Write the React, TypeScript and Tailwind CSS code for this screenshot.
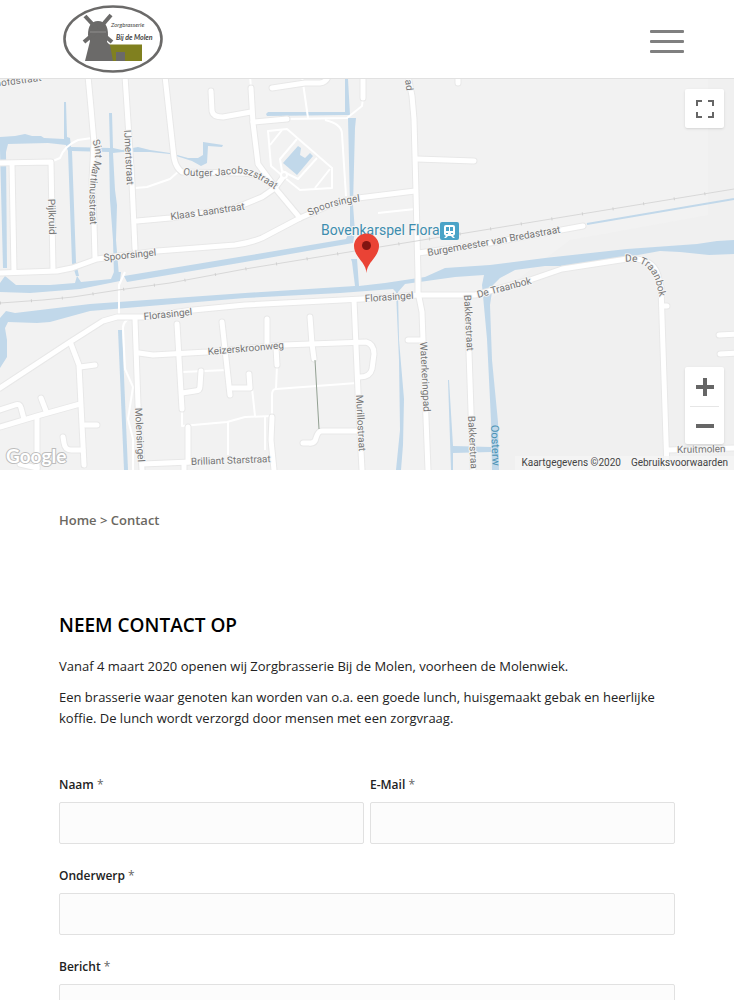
import React from 'react';

const water = [
  "M0 137 L15 136 L25 134 L32 136 L41 136 L44 138 L64 139 L64 102 L66 102 L67 137 L70 138 L71 147 L110 148 L109 113 L112 113 L113 148 L122 150 L138 147 L150 150 L170 153 L188 158 L198 158 L203 155 L203 142 L223 145 L222 147 L208 146 L207 163 L201 166 L192 161 L170 154 L150 152 L122 152 L113 153 L115 190 L117 205 L116 240 L119 276 L114 276 L113 240 L110 200 L109 152 L72 151 L76 262 L79 276 L76 276 L72 263 L68 151 L66 145 L48 143 L8 144 L6 152 L7 268 L3 268 L0 150 Z",
  "M0 283 L5 276 L16 285 L50 285 L75 283 L77 276 L81 282 L111 279 L114 272 L121 272 L120 281 L80 289 L30 293 L0 292 Z",
  "M124 276 L245 256 L346 239 L350 230 L350 205 L348 118 L356 118 L355 128 L353 205 L355 232 L353 243 L330 247 L245 262 L127 282 Z",
  "M345 79 L348 79 L350 115 L345 115 L267 116 L266 114 L268 112 L345 112 Z",
  "M0 318 L6 311 L15 313 L90 304 L245 293 L355 286 L352 262 L351 259 L357 259 L359 286 L385 283 L425 277 L445 268 L490 265 L545 258 L627 249 L697 244 L717 241 L734 240 L734 254 L709 255 L680 252 L660 251 L627 257 L565 266 L545 266 L515 270 L500 278 L493 285 L490 305 L492 360 L498 422 L499 470 L492 470 L491 420 L487 339 L482 285 L484 275 L455 277 L405 284 L398 292 L399 340 L404 399 L403 445 L401 470 L396 470 L400 430 L399 360 L396 292 L393 289 L340 293 L245 298 L90 311 L50 322 L37 323 L8 322 L5 328 L7 340 L7 357 L0 368 Z",
  "M118 330 L122 330 L128 470 L124 470 Z",
  "M448 380 L449 380 L453 446 L491 447 L491 452 L453 453 L453 470 L451 470 Z",
  "M283 163 L298 146 L301 148 L300 155 L305 158 L310 153 L313 156 L297 175 Z",
];

const roads = [
  "M88 76 L91 108 L94 143 L92 180 L94 223 L95 258",
  "M125 76 L132 183 L135 249",
  "M165 76 L174 158 Q176 168 182 172 L240 173 Q258 172 275 187",
  "M211 91 L212 111 Q213 117 223 117 L251 112",
  "M0 163 L51 162 L53 270",
  "M12 164 L14 272",
  "M0 273 L57 271 L72 268 L97 259 L157 251 L235 245 Q250 243 262 238 L300 218 L330 205 L358 198 L415 191",
  "M137 221 L170 218 L235 208 L262 197 L275 188 L284 176",
  "M275 188 L300 218",
  "M251 88 L253 123 L258 164 L275 187",
  "M253 122 L287 119",
  "M363 76 L363 98",
  "M272 88 L305 83 L320 83 Q327 82 328 76",
  "M408 76 L412 96 L414 119 L416 193 L418 276 L418 292 L422 312 L423 340 L428 470",
  "M417 159 L474 161",
  "M458 76 L458 83",
  "M418 253 L490 243 L583 226",
  "M0 388 L70 342 L103 321 L117 317 L143 317 L193 310 L245 305 L362 299 L418 295 L475 295 L530 280 L562 269 L627 259 Q652 257 658 275 L661 287 L667 470",
  "M662 306 L667 306",
  "M719 335 L740 334",
  "M720 354 L740 353",
  "M668 450 L734 448",
  "M135 319 L138 405 L142 470",
  "M71 344 L79 365 L84 465",
  "M80 367 L95 365",
  "M85 425 L97 425",
  "M63 437 L64 443 Q65 450 71 450 L83 450",
  "M0 427 L37 416 L80 404",
  "M0 410 L15 405 Q20 403 21 408 L24 419",
  "M41 398 L46 411",
  "M37 418 L37 470",
  "M20 464 L37 468",
  "M139 353 L153 355 L207 352 L283 345 L366 342 Q374 344 374 354 L372 369 Q370 377 360 377",
  "M177 324 L182 409",
  "M188 427 L188 462",
  "M222 322 L230 395",
  "M182 393 L195 391 Q200 391 200 386 L201 371",
  "M232 388 L250 388 L249 374",
  "M143 464 L190 462",
  "M184 464 L184 472",
  "M267 319 L267 344",
  "M276 347 L277 365",
  "M310 317 L312 344 L314 359",
  "M272 417 L271 440 L274 470",
  "M357 431 L322 431 Q318 431 316 438 Q315 444 309 443 L303 443",
  "M354 300 L358 392 L362 470",
  "M408 340 L422 340",
  "M467 296 L469 352 L473 470",
];

const paths = [
  "M53 161 L60 158 Q64 146 78 140 L92 138",
  "M135 188 L147 187 L170 179 L179 171",
  "M250 76 L251 88",
  "M287 119 L347 118 L362 106 L363 98",
  "M302 76 L308 118",
  "M325 120 Q342 124 342 134 L346 196",
  "M378 213 L415 209",
  "M125 272 L119 285 L119 317",
  "M135 317 Q123 319 123 328 L125 369 L133 387 L128 419 L133 439 L133 470",
  "M182 409 L182 426 L227 422 L245 417 L272 416",
  "M182 372 L227 370",
  "M252 388 L255 416",
  "M228 422 L228 455",
  "M277 365 L276 389",
  "M357 383 L276 389 Q272 389 272 395 L272 416",
  "M265 417 L265 450",
  "M268 131 L287 129 L332 168 L332 188 L300 190 L285 178 L271 166 Z",
  "M270 145 L282 130",
  "M297 139 L280 159 L282 171 L298 179 L317 158",
  "M330 169 L315 188",
];

// street names that follow a bend in the road
const curved = [
  { id: "hoofd", d: "M-4 87 Q20 84 60 78", text: "oofdstraat" },
  { id: "martinus", d: "M92 141 Q98 153 93 166 Q87 190 91 236", text: "Sint Martinusstraat" },
  { id: "outger", d: "M183 175 Q206 178 232 174 Q250 170 278 192", text: "Outger Jacobszstraat" },
  { id: "spoor", d: "M310 216 Q330 204 372 200", text: "Spoorsingel" },
  { id: "traan", d: "M625 262 Q648 259 656 282 L661 304", text: "De Traanbok" },
];

const labels = [
  { x: 48, y: 199, a: 88, text: "Pijlkruid" },
  { x: 124, y: 130, a: 87, text: "IJmertstraat" },
  { x: 171, y: 220, a: -8, text: "Klaas Laanstraat" },
  { x: 104, y: 261, a: -6, text: "Spoorsingel" },
  { x: 428, y: 256, a: -10, text: "Burgemeester van Bredastraat" },
  { x: 144, y: 320, a: -6, text: "Florasingel" },
  { x: 365, y: 302, a: -4, text: "Florasingel" },
  { x: 478, y: 298, a: -15, text: "De Traanbok" },
  { x: 208, y: 355, a: -5, text: "Keizerskroonweg" },
  { x: 135, y: 408, a: 87, text: "Molensingel" },
  { x: 191, y: 465, a: -2, text: "Brilliant Starstraat" },
  { x: 356, y: 395, a: 87, text: "Murillostraat" },
  { x: 420, y: 342, a: 87, text: "Waterkeringpad" },
  { x: 464, y: 295, a: 87, text: "Bakkerstraat" },
  { x: 468, y: 416, a: 87, text: "Bakkerstraa" },
  { x: 405, y: 80, a: 82, text: "ad" },
  { x: 677, y: 453, a: -1, text: "Kruitmolen" },
];

function Logo() {
  return (
    <svg viewBox="0 0 100 68" className="w-[100px] h-[68px]" aria-label="Zorgbrasserie Bij de Molen">
      <ellipse cx="50" cy="34" rx="48.500" ry="32.500" fill="#fff" stroke="#6b6a69" strokeWidth="2.6" />
      <path d="M46 39.500 H79 V56 H49 Z" fill="#80801f" />
      <path d="M22 56 L27 36 L25 30 Q25 16 35 16 Q45 16 45 30 L44 37 L47 40 L50 56 Z" fill="#6b6a69" />
      <g stroke="#6b6a69" strokeWidth="4">
        <path d="M34 24 L22 11" />
        <path d="M36 24 L48 10" />
        <path d="M34 26 L21 37" />
        <path d="M36 26 L49 37" />
      </g>
      <path d="M27 27 H43" stroke="#fff" strokeWidth="0.5" opacity="0.5" />
      <path d="M53 47 H62 V56 H53 Z" fill="#6b6a69" />
      <g fontFamily="Lato, sans-serif" fontStyle="italic" fill="#444">
        <text x="48" y="22" fontSize="6">Zorgbrasserie</text>
        <text x="53" y="35" fontSize="7" fontWeight="bold">Bij de Molen</text>
      </g>
    </svg>
  );
}

function StreetMap() {
  return (
    <svg viewBox="0 79 734 391" preserveAspectRatio="xMidYMid slice" className="block w-full h-full">
      <rect x="0" y="79" width="734" height="391" fill="#f2f2f2" />
      <path d="M708 79 H734 V470 H490 V300 L570 240 L708 215 Z" fill="#f0f0f0" />
      <g fill="#c1d8ea">
        {water.map((d) => <path key={d} d={d} />)}
      </g>
      <path d="M587 224 L734 199" stroke="#c1d8ea" strokeWidth="2" />
      <g fill="none" stroke="#fff" strokeWidth="2" strokeLinejoin="round">
        {paths.map((d) => <path key={d} d={d} />)}
      </g>
      <g fill="none" stroke="#e8e8e8" strokeWidth="7" strokeLinejoin="round" strokeLinecap="round">
        {roads.map((d) => <path key={d} d={d} />)}
      </g>
      <g fill="none" stroke="#fff" strokeWidth="5" strokeLinejoin="round" strokeLinecap="round">
        {roads.map((d) => <path key={d} d={d} />)}
      </g>
      <circle cx="284" cy="175" r="3" fill="#f2f2f2" stroke="#fff" strokeWidth="2" />
      <path d="M315 360 L319 429" stroke="#92a092" strokeWidth="1" />
      <path d="M0 303 L43 300 L73 297 L118 290 L170 283 L245 269 L355 251 L490 229 L734 189" fill="none" stroke="#d8d8d8" strokeWidth="1" />
      <path d="M0 303 L43 300 L73 297 L118 290 L170 283 L245 269 L355 251 L490 229 L734 189" fill="none" stroke="#d0d0d0" strokeWidth="3" strokeDasharray="1 30" />

      <g fontFamily="Roboto, sans-serif" fontSize="10" fill="#757575" stroke="#f5f5f5" strokeWidth="2" strokeLinejoin="round" paintOrder="stroke">
        {curved.map((c) => (
          <g key={c.id}>
            <path id={c.id} d={c.d} fill="none" stroke="none" />
            <text><textPath href={"#" + c.id}>{c.text}</textPath></text>
          </g>
        ))}
        {labels.map((l) => (
          <text key={l.text + l.x} transform={`translate(${l.x} ${l.y}) rotate(${l.a})`}>{l.text}</text>
        ))}
        <text transform="translate(491 425) rotate(88)" fontSize="11" fill="#4b93b5" stroke="none">Oosterw</text>
        <text x="321" y="235" fontSize="14" fill="#3e8dae">Bovenkarspel Flora</text>
      </g>

      <rect x="440" y="222" width="19" height="18" rx="2" fill="#4ba3c7" />
      <path fillRule="evenodd" d="M446 225 H453 Q455 225 455 227 V234 Q455 235 453 236 L455 238 H453 L451 236 H448 L446 238 H444 L446 236 Q444 235 444 234 V227 Q444 225 446 225 Z M446 227 V231 H449 V227 Z M450 227 V231 H453 V227 Z M446 233 V234 H448 V233 Z M451 233 V234 H453 V233 Z" fill="#fff" />

      <path d="M366.500 273 C366 262 354 257 354 246 A12.500 12.500 0 0 1 379 246 C379 257 367 262 366.500 273 Z" fill="#ea4335" />
      <circle cx="366.500" cy="245.500" r="4.500" fill="#811411" />

      <text x="6" y="463" fontFamily="Lato, sans-serif" fontSize="19" fontWeight="bold" fill="#fff" stroke="#bdbdbd" strokeWidth="2" paintOrder="stroke">Google</text>
    </svg>
  );
}

function Required() {
  return <span className="font-normal text-[#666]">*</span>;
}

const labelClass = "block text-[12px] leading-[20px] font-semibold text-[#222] mb-[7px]";
const fieldClass = "block w-full h-[42px] px-3 text-[13px] bg-[#fcfcfc] border border-[#e1e1e1] rounded-[2px] focus:outline-none";

export default function App() {
  return (
    <div className="bg-white text-[#222] font-['Open_Sans',sans-serif]">
      <header className="flex items-center justify-between h-[79px] pl-[63px] pr-[50px] border-b border-[#e1e1e1]">
        <a href="#"><Logo /></a>
        <button type="button" aria-label="Menu" className="flex flex-col gap-[7px] pt-1">
          <span className="block w-[34px] h-[3px] rounded-[1px] bg-[#808080]" />
          <span className="block w-[34px] h-[3px] rounded-[1px] bg-[#808080]" />
          <span className="block w-[34px] h-[3px] rounded-[1px] bg-[#808080]" />
        </button>
      </header>

      <section className="relative h-[391px] overflow-hidden">
        <StreetMap />
        <button type="button" aria-label="Volledig scherm" className="absolute top-[10px] right-[10px] w-[39px] h-[39px] flex items-center justify-center bg-white rounded-[2px] shadow-sm">
          <svg viewBox="0 0 18 18" className="w-[18px] h-[18px]" fill="none" stroke="#666" strokeWidth="2">
            <path d="M1 6 V1 H6 M12 1 H17 V6 M17 12 V17 H12 M6 17 H1 V12" />
          </svg>
        </button>
        <div className="absolute right-[10px] bottom-[26px] w-[39px] bg-white rounded-[2px] shadow-sm">
          <button type="button" aria-label="Inzoomen" className="flex items-center justify-center w-full h-[39px]">
            <svg viewBox="0 0 18 18" className="w-[18px] h-[18px]" fill="#666"><path d="M7 0 H11 V7 H18 V11 H11 V18 H7 V11 H0 V7 H7 Z" /></svg>
          </button>
          <div className="h-px mx-[5px] bg-[#e6e6e6]" />
          <button type="button" aria-label="Uitzoomen" className="flex items-center justify-center w-full h-[37px]">
            <svg viewBox="0 0 18 18" className="w-[18px] h-[18px]" fill="#666"><path d="M0 7 H18 V11 H0 Z" /></svg>
          </button>
        </div>
        <div className="absolute right-0 bottom-0 flex gap-[10px] px-[6px] h-[14px] text-[10px] leading-[14px] text-[#444] bg-[#f5f5f5]/70 font-[Roboto,sans-serif]">
          <span>Kaartgegevens ©2020</span>
          <a href="#">Gebruiksvoorwaarden</a>
        </div>
      </section>

      <main className="px-[59px] pt-10 pb-12">
        <nav className="text-[13px] leading-[20px] font-semibold text-[#6b6862]">
          <a href="#">Home</a> &gt; <span>Contact</span>
        </nav>

        <h1 className="mt-[81px] text-[19px] leading-[28px] font-semibold text-black uppercase">Neem contact op</h1>
        <div className="mt-[17px] space-y-[10px] text-[13px] leading-[21px]">
          <p>Vanaf 4 maart 2020 openen wij Zorgbrasserie Bij de Molen, voorheen de Molenwiek.</p>
          <p>Een brasserie waar genoten kan worden van o.a. een goede lunch, huisgemaakt gebak en heerlijke koffie. De lunch wordt verzorgd door mensen met een zorgvraag.</p>
        </div>

        <form className="mt-[46px] grid grid-cols-2 gap-x-[6px] gap-y-[22px]">
          <div>
            <label htmlFor="naam" className={labelClass}>Naam <Required /></label>
            <input id="naam" type="text" className={fieldClass} />
          </div>
          <div>
            <label htmlFor="email" className={labelClass}>E-Mail <Required /></label>
            <input id="email" type="email" className={fieldClass} />
          </div>
          <div className="col-span-2">
            <label htmlFor="onderwerp" className={labelClass}>Onderwerp <Required /></label>
            <input id="onderwerp" type="text" className={fieldClass} />
          </div>
          <div className="col-span-2">
            <label htmlFor="bericht" className={labelClass}>Bericht <Required /></label>
            <textarea id="bericht" rows={7} className="block w-full p-3 text-[13px] bg-[#fcfcfc] border border-[#e1e1e1] rounded-[2px] focus:outline-none" />
          </div>
        </form>
      </main>
    </div>
  );
}
